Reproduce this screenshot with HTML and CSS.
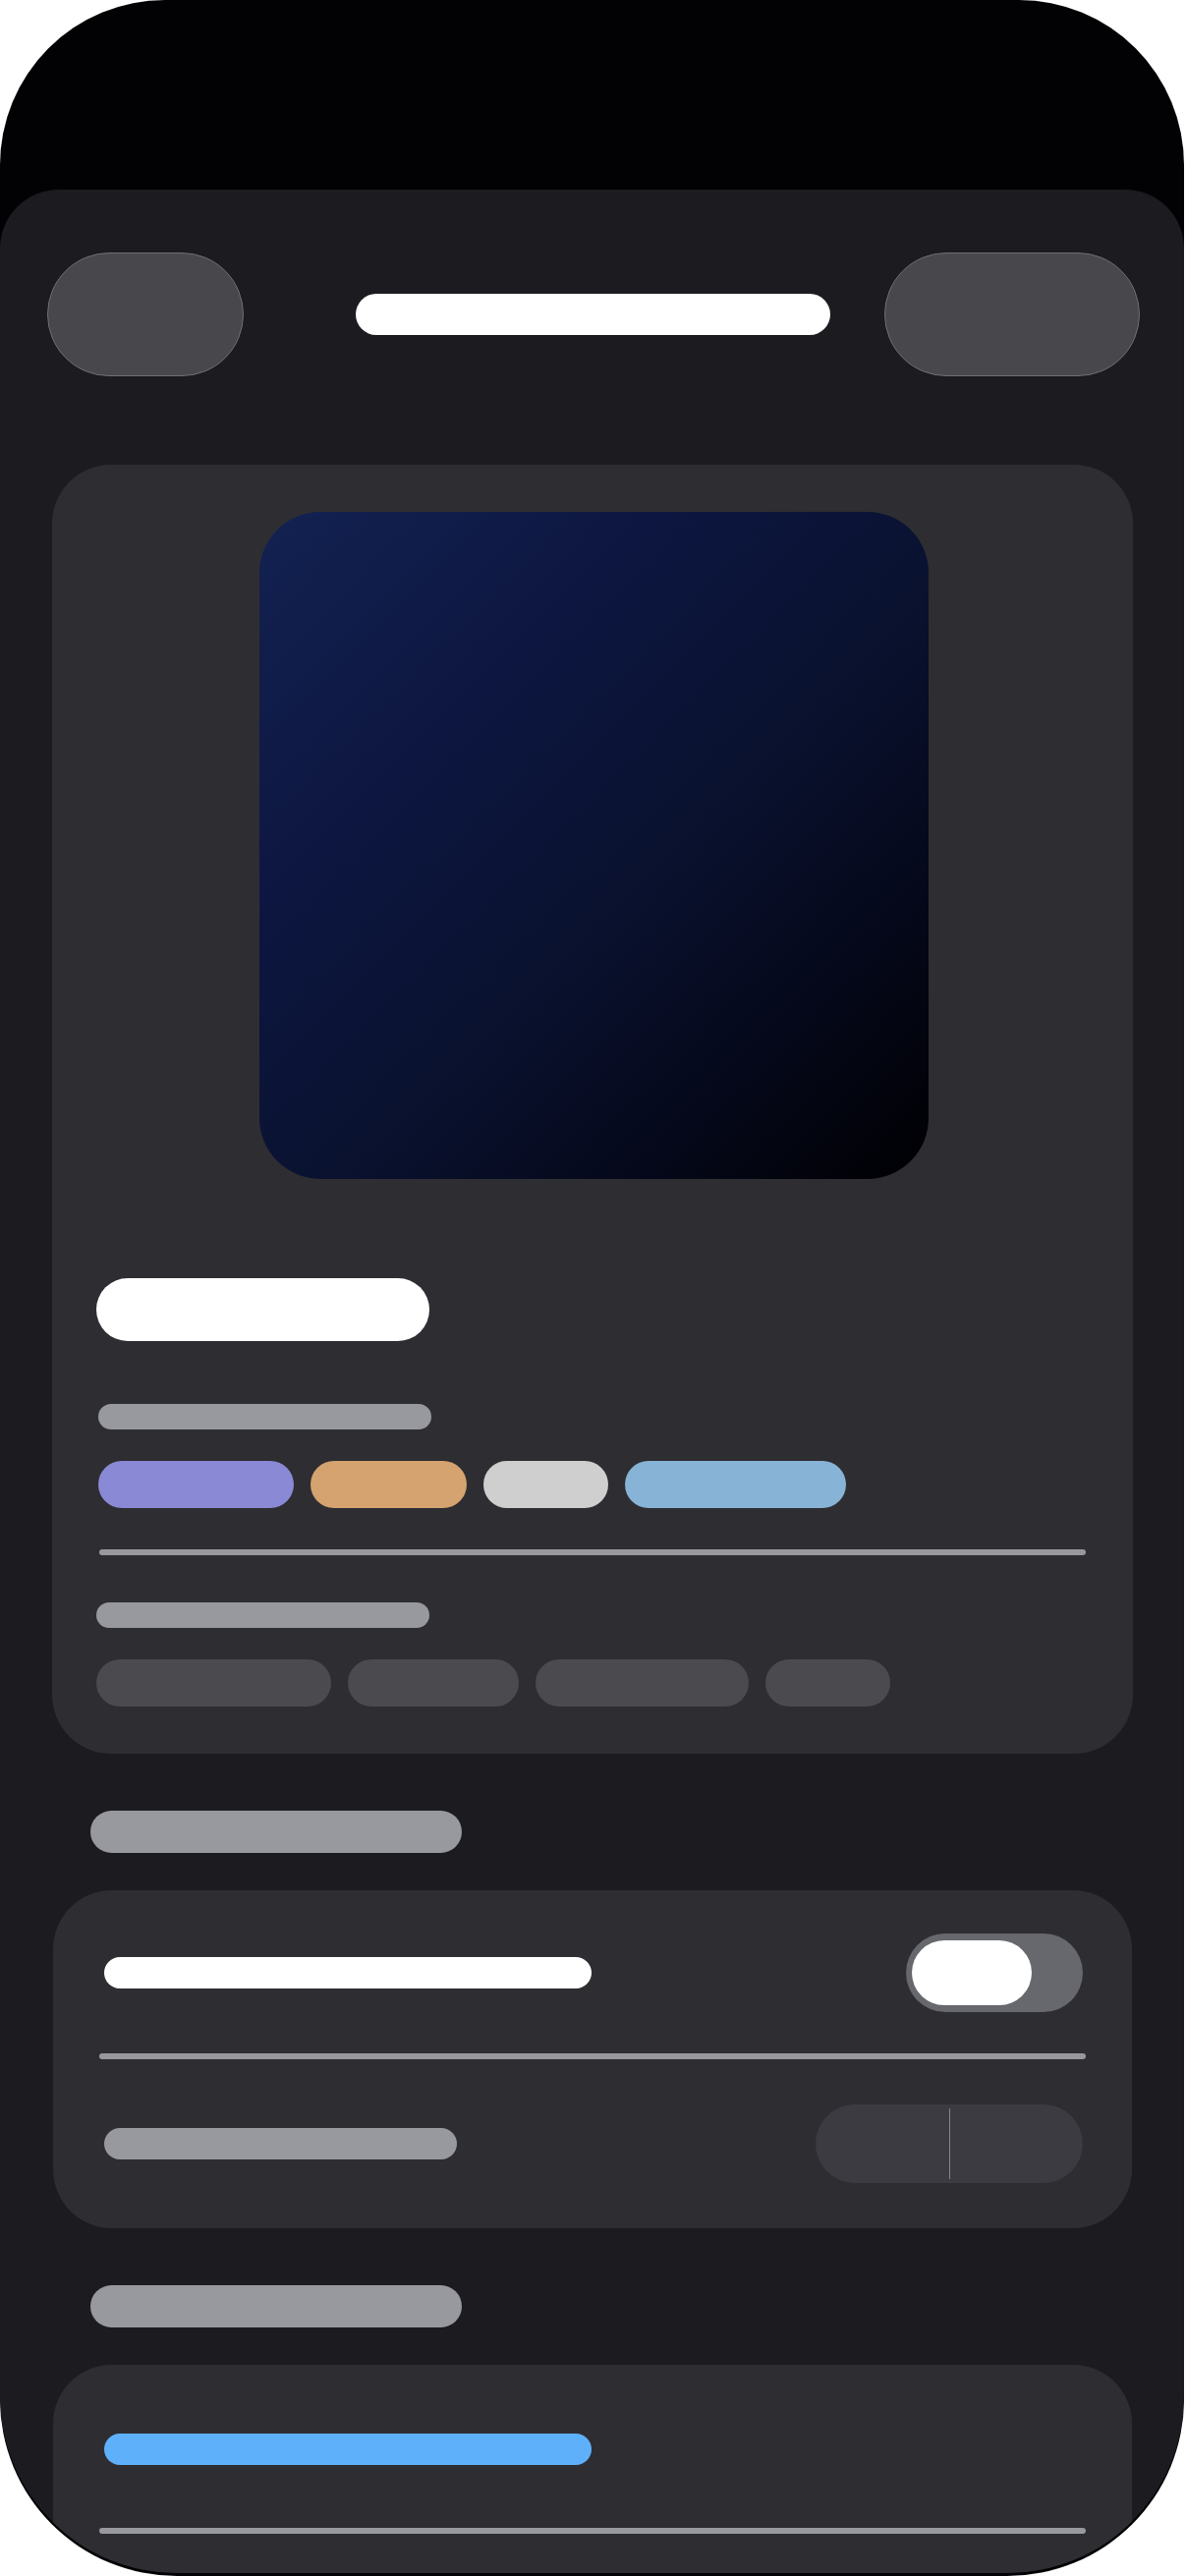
FILE: index.html
```html
<!DOCTYPE html>
<html lang="en">
<head>
<meta charset="utf-8">
<title>Now Playing</title>
<link rel="stylesheet" href="styles.css">
</head>
<body>
<div class="phone">
  <div class="screen">
    <header class="nav">
      <div class="nav-btn nav-btn--back"></div>
      <div class="nav-title"></div>
      <div class="nav-btn nav-btn--action"></div>
    </header>

    <section class="card card--hero">
      <div class="artwork"></div>
      <div class="hero-title"></div>
      <div class="meta-label meta-label--shift"></div>
      <div class="chip-row chip-row--shift">
        <span class="chip chip--purple" style="width:199px"></span>
        <span class="chip chip--orange" style="width:159px"></span>
        <span class="chip chip--silver" style="width:127px"></span>
        <span class="chip chip--blue" style="width:225px"></span>
      </div>
      <div class="divider divider--hero"></div>
      <div class="meta-label"></div>
      <div class="chip-row">
        <span class="chip chip--dark" style="width:239px"></span>
        <span class="chip chip--dark" style="width:174px"></span>
        <span class="chip chip--dark" style="width:217px"></span>
        <span class="chip chip--dark" style="width:127px"></span>
      </div>
    </section>

    <div class="section-label"></div>
    <section class="card card--list card--settings">
      <div class="row">
        <div class="row-label row-label--white" style="width:496px"></div>
        <div class="toggle"><div class="toggle-knob"></div></div>
      </div>
      <div class="divider divider--list"></div>
      <div class="row">
        <div class="row-label row-label--gray" style="width:359px"></div>
        <div class="segmented">
          <span class="seg"></span>
          <span class="seg-sep"></span>
          <span class="seg"></span>
        </div>
      </div>
    </section>

    <div class="section-label"></div>
    <section class="card card--list card--links">
      <div class="row">
        <div class="row-label row-label--blue" style="width:496px"></div>
      </div>
      <div class="divider divider--list divider--tight"></div>
      <div class="row">
        <div class="row-label row-label--gray" style="width:359px"></div>
      </div>
    </section>
  </div>
</div>
</body>
</html>
```

FILE: styles.css
```css
* { box-sizing: border-box; }

html, body {
  margin: 0;
  padding: 0;
  background: #ffffff;
  font-family: "Inter", "Liberation Sans", sans-serif;
}

.phone {
  width: 1205px;
  height: 2622px;
  background: #020204;
  border-radius: 168px 168px 180px 180px;
  overflow: hidden;
  display: flex;
  flex-direction: column;
}

.screen {
  margin-top: 193px;
  height: 2426px;
  background: #1c1b20;
  border-radius: 60px 60px 180px 180px;
  overflow: hidden;
  display: flex;
  flex-direction: column;
  flex-shrink: 0;
}

/* nav */
.nav {
  display: flex;
  align-items: center;
  padding: 64px 45px 0 48px;
}

.nav-btn {
  height: 126px;
  border-radius: 63px;
  background: #48474c;
  border: 1px solid #706f75;
  flex-shrink: 0;
}

.nav-btn--back { width: 200px; }
.nav-btn--action { width: 260px; margin-left: auto; }

.nav-title {
  width: 483px;
  height: 42px;
  border-radius: 21px;
  background: #ffffff;
  margin-left: 114px;
}

/* cards */
.card {
  background: #2e2d32;
  border-radius: 60px;
  display: flex;
  flex-direction: column;
  flex-shrink: 0;
}

.card--hero {
  margin: 90px 52px 0 53px;
  padding: 48px 48px 48px 45px;
}

.artwork {
  width: 681px;
  height: 679px;
  margin-left: 166px;
  border-radius: 62px;
  background: linear-gradient(135deg, #132252 0%, #0d1640 30%, #0a1230 55%, #05081a 78%, #000002 100%);
}

.hero-title {
  width: 339px;
  height: 64px;
  border-radius: 32px;
  background: #ffffff;
  margin-top: 101px;
}

.meta-label {
  width: 339px;
  height: 26px;
  border-radius: 13px;
  background: #98999e;
  margin-top: 48px;
}

.meta-label--shift {
  margin-top: 64px;
  margin-left: 2px;
}

.chip-row {
  display: flex;
  gap: 17px;
  margin-top: 32px;
}

.chip-row--shift { margin-left: 2px; }

.chip {
  display: block;
  height: 48px;
  border-radius: 24px;
}

.chip--purple { background: #8a89d6; }
.chip--orange { background: #d4a36f; }
.chip--silver { background: #cfcfcf; }
.chip--blue   { background: #87b4d6; }
.chip--dark   { background: #4b4a4f; }

.divider {
  height: 6px;
  border-radius: 3px;
  background: #98999e;
}

.divider--hero {
  width: 1004px;
  margin-top: 42px;
  margin-left: 3px;
}

/* section labels */
.section-label {
  width: 378px;
  height: 43px;
  border-radius: 22px;
  background: #98999e;
  margin: 58px 0 0 92px;
  flex-shrink: 0;
}

/* list cards */
.card--list {
  margin: 38px 53px 0 54px;
}

.card--settings { padding: 44px 0 46px; }
.card--links { padding: 46px 0 46px; }

.row {
  height: 80px;
  display: flex;
  align-items: center;
  justify-content: space-between;
  padding: 0 50px 0 52px;
}

.row-label {
  height: 32px;
  border-radius: 16px;
}

.row-label--white { background: #ffffff; }
.row-label--gray  { background: #98999e; }
.row-label--blue  { background: #5fb0fb; }

.divider--list {
  margin: 42px 47px 46px;
}

.divider--tight {
  margin-top: 40px;
}

/* toggle */
.toggle {
  width: 180px;
  height: 80px;
  border-radius: 40px;
  background: #67686d;
  padding: 7px 0 7px 6px;
  display: flex;
}

.toggle-knob {
  width: 122px;
  height: 66px;
  border-radius: 33px;
  background: #ffffff;
}

/* segmented control */
.segmented {
  width: 272px;
  height: 80px;
  border-radius: 40px;
  background: #3c3b41;
  display: flex;
  align-items: center;
}

.seg {
  flex: 1;
  height: 100%;
}

.seg-sep {
  width: 1px;
  height: 72px;
  background: #85858b;
}
```
